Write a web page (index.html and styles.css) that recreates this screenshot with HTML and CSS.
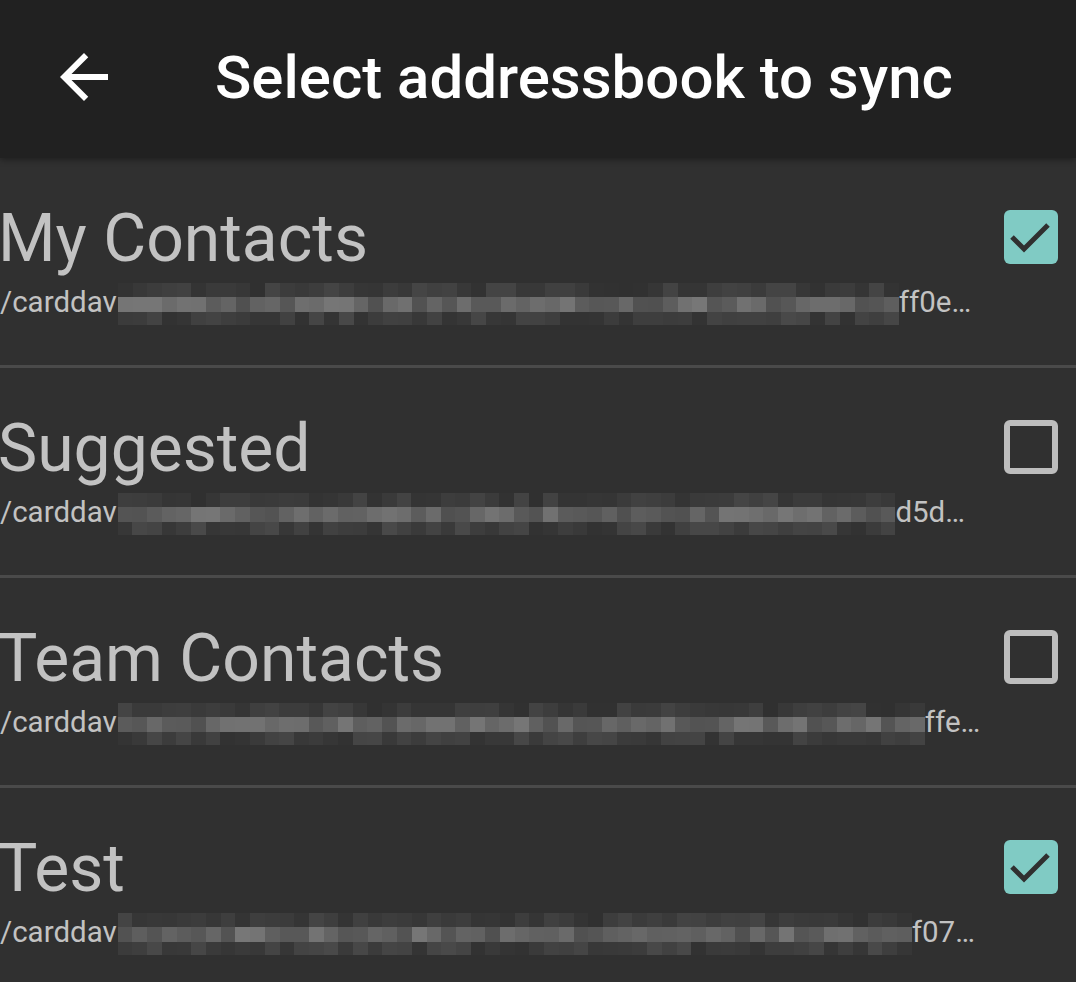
FILE: index.html
```html
<!DOCTYPE html>
<html>
<head>
<meta charset="utf-8">
<link rel="stylesheet" href="styles.css">
</head>
<body>
<header class="appbar">
  <div class="back">
    <svg viewBox="0 0 24 24" width="72" height="72"><path fill="#fff" d="M20 11H7.83l5.59-5.59L12 4l-8 8 8 8 1.41-1.41L7.83 13H20v-2z"/></svg>
  </div>
  <h1 class="title">Select addressbook to sync</h1>
</header>
<main class="list">
  <div class="item">
    <div class="texts">
      <div class="name">My Contacts</div>
      <div class="path"><span>/carddav</span><span class="mosaic" data-w="781" data-seed="3"></span><span>ff0e…</span></div>
    </div>
    <div class="box checked"><svg viewBox="0 0 54 54" width="54" height="54"><path d="M8 27 L20 39 L44 15" fill="none" stroke="#303030" stroke-width="5"/></svg></div>
  </div>
  <div class="item">
    <div class="texts">
      <div class="name">Suggested</div>
      <div class="path"><span>/carddav</span><span class="mosaic" data-w="778" data-seed="7"></span><span>d5d…</span></div>
    </div>
    <div class="box"></div>
  </div>
  <div class="item">
    <div class="texts">
      <div class="name">Team Contacts</div>
      <div class="path"><span>/carddav</span><span class="mosaic" data-w="807" data-seed="11"></span><span>ffe…</span></div>
    </div>
    <div class="box"></div>
  </div>
  <div class="item">
    <div class="texts">
      <div class="name">Test</div>
      <div class="path"><span>/carddav</span><span class="mosaic" data-w="794" data-seed="17"></span><span>f07…</span></div>
    </div>
    <div class="box checked"><svg viewBox="0 0 54 54" width="54" height="54"><path d="M8 27 L20 39 L44 15" fill="none" stroke="#303030" stroke-width="5"/></svg></div>
  </div>
</main>
<script src="script.js"></script>
</body>
</html>
```
FILE: styles.css
```css
* { box-sizing: border-box; }
html, body { margin: 0; padding: 0; }
body {
  background: #303030;
  font-family: Roboto, "Liberation Sans", sans-serif;
  width: 1076px;
  height: 982px;
  overflow: hidden;
}
.appbar {
  height: 158px;
  background: #212121;
  display: flex;
  align-items: center;
  padding-left: 48px;
  padding-bottom: 4px;
  box-shadow: 0 2px 6px rgba(0,0,0,0.35);
  position: relative;
  z-index: 1;
}
.back { width: 72px; height: 72px; display: flex; }
.title {
  margin: 0 0 0 95px;
  color: #fff;
  font-size: 60px;
  font-weight: 500;
  letter-spacing: 0;
}
.list { display: flex; flex-direction: column; }
.item {
  height: 210px;
  border-bottom: 3px solid #4a4a4a;
  display: flex;
  justify-content: space-between;
  padding-top: 43px;
}
.texts { display: flex; flex-direction: column; min-width: 0; }
.name {
  color: #c2c2c2;
  font-size: 66px;
  line-height: 76px;
  margin-left: -2px;
}
.path {
  color: #c2c2c2;
  font-size: 29.5px;
  line-height: 36px;
  margin-top: 2px;
  display: flex;
  align-items: center;
  white-space: nowrap;
}
.mosaic {
  display: grid;
  grid-template-rows: 14px 15px 13px;
  grid-auto-flow: column;
  height: 42px;
  margin-top: 4px;
  margin-left: 1px;
}
.mosaic i { display: block; }
.box {
  width: 54px;
  height: 54px;
  margin: 9px 18px 0 0;
  border: 6px solid #bdbdbd;
  border-radius: 6px;
  flex-shrink: 0;
}
.box.checked {
  border: none;
  background: #80cbc4;
}
.box svg { display: block; }
```
FILE: script.js
```js
document.querySelectorAll('.mosaic').forEach(function (m) {
  var w = parseInt(m.dataset.w, 10);
  var seed = parseInt(m.dataset.seed, 10);
  function rnd() { seed = (seed * 9301 + 49297) % 233280; return seed / 233280; }
  var cols = Math.round(w / 14.6);
  m.style.gridTemplateColumns = 'repeat(' + cols + ', ' + (w / cols) + 'px)';
  for (var c = 0; c < cols; c++) {
    var top = rnd() < 0.35 ? 48 + Math.floor(rnd() * 14) : 52 + Math.floor(rnd() * 18);
    var mid = 80 + Math.floor(rnd() * 40);
    var bot = 50 + Math.floor(rnd() * 24);
    [top, mid, bot].forEach(function (v) {
      var i = document.createElement('i');
      i.style.background = 'rgb(' + v + ',' + v + ',' + v + ')';
      m.appendChild(i);
    });
  }
});
```
